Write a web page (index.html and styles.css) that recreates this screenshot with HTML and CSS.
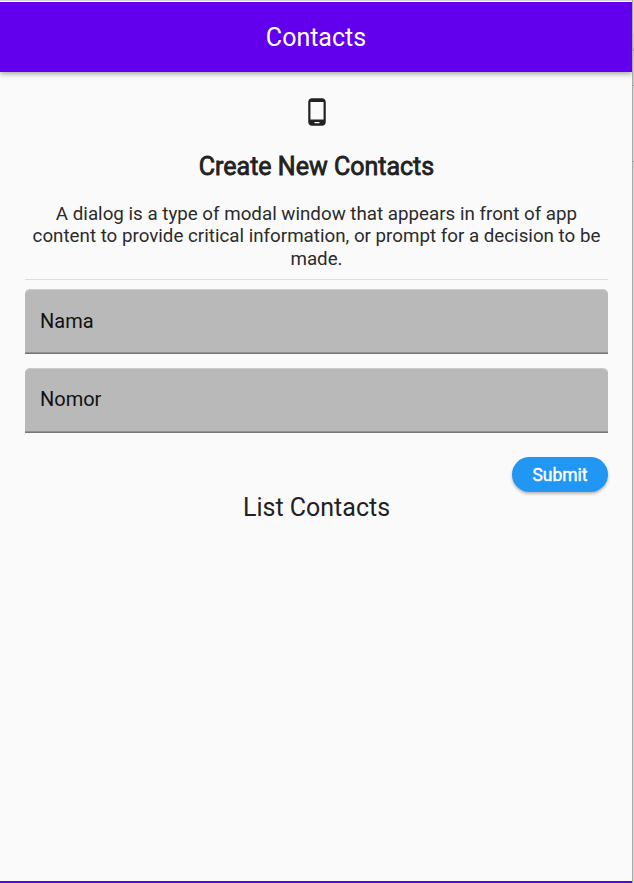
FILE: index.html
```html
<!DOCTYPE html>
<html lang="en">
<head>
<meta charset="utf-8">
<title>Contacts</title>
<link rel="stylesheet" href="styles.css">
</head>
<body>
<div class="screen">
<header class="app-bar"><h1>Contacts</h1></header>
<main>
<svg class="phone" viewBox="0 0 24 24"><path d="M16 1H8C6.34 1 5 2.34 5 4v16c0 1.66 1.34 3 3 3h8c1.66 0 3-1.34 3-3V4c0-1.660-1.340-3-3-3zm-2 20h-4v-1h4v1zm3.250-3H6.750V4h10.500v14z"/></svg>
<h2>Create New Contacts</h2>
<p>A dialog is a type of modal window that appears in front of app<br>content to provide critical information, or prompt for a decision to be<br>made.</p>
<hr>
<form>
<div class="field">Nama</div>
<div class="field number">Nomor</div>
<button type="button">Submit</button>
</form>
<h3>List Contacts</h3>
</main>
</div>
<div class="window-edge"></div>
</body>
</html>
```
FILE: styles.css
```css
* { box-sizing: border-box; margin: 0; padding: 0; }
body { display: flex; font-family: Roboto, sans-serif; background: #fafafa; color: #212121; }
.screen { height: 883px; width: 632px; border-top: 1px solid #d5d5dd; border-bottom: 2px solid #6200ee; overflow: hidden; }
.window-edge { width: 2px; height: 883px; border-left: 1px solid #aaa; background: linear-gradient(#d6d6d6 34px, #c8cdcb 34px 48px, #a4abae 48px 51px, #c3ccd6 51px 85px, #999 85px 86px, #d4d4d4 86px 161px, #999 161px 162px, #d4d4d4 162px); }
.app-bar { height: 71px; border-top: 1px solid #f8f8fb; background: #6200ee; color: #fff; display: flex; align-items: center; justify-content: center; box-shadow: 0 2px 5px #0005; }
h1 { font-size: 25px; font-weight: 400; }
main { padding: 25px 24px 0 25px; display: flex; flex-direction: column; align-items: center; }
.phone { width: 30px; height: 30px; fill: #212121; }
h2 { font-size: 25px; font-weight: 400; -webkit-text-stroke: .8px #212121; line-height: 30px; margin-top: 25px; }
p { font-size: 18.750px; line-height: 22.500px; text-align: center; color: #2b2b2b; margin-top: 20.500px; white-space: nowrap; }
hr { width: 100%; border: 0; border-top: 1px solid #ddd; margin-top: 9px; }
form { width: 100%; display: flex; flex-direction: column; margin-top: 9px; }
.field { height: 65px; background: #b9b9b9; border-top: 1px solid #ccc; border-bottom: 1px solid #777; box-shadow: inset 0 -1px #929292; border-radius: 5px 5px 0 0; padding: 0 15px; font-size: 20px; line-height: 63px; color: #111; margin-bottom: 14px; }
.number { line-height: 61px; }
button { align-self: flex-end; width: 96px; height: 35px; border: 0; border-radius: 18px; background: #2196f3; color: #fff; font: 400 17.500px Roboto, sans-serif; -webkit-text-stroke: .4px #fff; margin-top: 10px; box-shadow: 0 2px 3px #0004; }
h3 { font-size: 25px; font-weight: 400; line-height: 30px; margin-top: 1px; }
```
